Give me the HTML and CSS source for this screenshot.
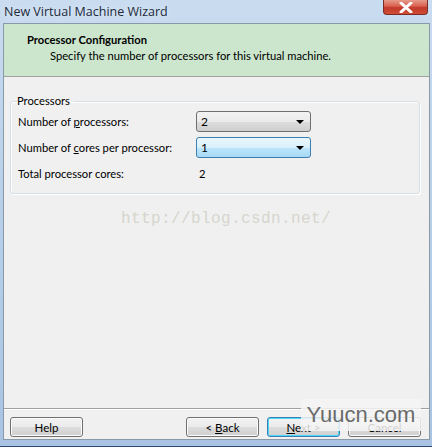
FILE: index.html
```html
<!DOCTYPE html>
<html lang="en">
<head>
    <meta charset="UTF-8">
    <title>New Virtual Machine Wizard</title>
    <link rel="stylesheet" href="styles.css">
</head>
<body>
    <div class="window">
        <div class="titlebar">
            <span class="title">New Virtual Machine Wizard</span>
            <span class="close">
                <svg width="16" height="11" viewBox="0 0 16 11"><path d="M3 1 L13 10 M13 1 L3 10" stroke="#fff" stroke-width="3" stroke-linecap="round"/></svg>
            </span>
        </div>
        <div class="client">
            <div class="header">
                <div class="header-title">Processor Configuration</div>
                <div class="header-sub">Specify the number of processors for this virtual machine.</div>
            </div>
            <div class="body">
                <fieldset class="group">
                    <legend>Processors</legend>
                    <div class="row">
                        <span class="label">Number of <u>p</u>rocessors:</span>
                        <div class="combo">2<span class="arrow"></span></div>
                    </div>
                    <div class="row">
                        <span class="label">Number of <u>c</u>ores per processor:</span>
                        <div class="combo focus">1<span class="arrow"></span></div>
                    </div>
                    <div class="row">
                        <span class="label">Total processor cores:</span>
                        <span class="value">2</span>
                    </div>
                </fieldset>
                <div class="watermark">http://blog.csdn.net/</div>
            </div>
            <div class="footer">
                <button class="btn">Help</button>
                <div class="spacer"></div>
                <button class="btn">&lt; <u>B</u>ack</button>
                <button class="btn default"><u>N</u>ext &gt;</button>
                <button class="btn">Cancel</button>
                <div class="yuucn">Yuucn.com</div>
            </div>
        </div>
    </div>
</body>
</html>
```

FILE: styles.css
```css
html, body { margin: 0; padding: 0; }
body { width: 432px; height: 447px; overflow: hidden; font-family: Lato, "Noto Sans", sans-serif; font-size: 11.2px; color: #000; background: #6d8fb8; }
.window { height: 447px; display: flex; flex-direction: column; background: linear-gradient(180deg, #c9dcf0 0%, #b9d1ea 40%, #a9c4e3 100%); padding: 0 2px 6px 3px; box-sizing: border-box; border-bottom: 1px solid #2b4a70; }
.titlebar { height: 23px; display: flex; align-items: flex-start; position: relative; flex-shrink: 0; }
.title { font-family: "Open Sans", "Noto Sans", sans-serif; font-size: 12.5px; color: #1e2a3a; padding: 3px 0 0 1px; text-shadow: 0 0 6px #e8f0fa; }
.close { position: absolute; right: 2px; top: 0; width: 43px; height: 14px; border: 1px solid #7a2c26; border-top: none; border-radius: 0 0 4px 4px; background: linear-gradient(180deg, #e79a8a 0%, #d8604c 45%, #c0392b 55%, #d24d35 100%); display: flex; align-items: center; justify-content: center; }
.client { flex: 1; display: flex; flex-direction: column; background: #f0f0f0; border: 1px solid #8a99a8; }
.header { height: 53px; background: #cbe6cc; border-bottom: 1px solid #a0a0a0; box-sizing: border-box; padding: 8px 0 0 23px; }
.header-title { font-weight: bold; line-height: 15px; }
.header-sub { padding-left: 23px; line-height: 17px; }
.body { flex: 1; padding: 17px 9px 0 6px; position: relative; }
.group { margin: 0; border: 1px solid #d5dfe5; border-radius: 3px; padding: 0 7px 7px 7px; box-shadow: inset 1px 1px 0 #fff, 1px 1px 0 #fff; }
.group legend { padding: 0 3px 0 0; margin-left: -1px; line-height: 14px; }
.row { display: flex; align-items: center; height: 26px; }
.label { width: 178px; }
.value { padding-left: 3px; }
.combo { width: 109px; height: 19px; border: 1px solid #707070; border-radius: 3px; background: linear-gradient(180deg, #f2f2f2 0%, #ebebeb 50%, #dddddd 51%, #cfcfcf 100%); display: flex; align-items: center; padding-left: 4px; position: relative; font-size: 12px; }
.combo.focus { border-color: #3c7fb1; background: linear-gradient(180deg, #eaf6fd 0%, #d9f0fc 50%, #bee6fd 51%, #a7d9f5 100%); }
.arrow { position: absolute; right: 6px; top: 8px; width: 0; height: 0; border-left: 4px solid transparent; border-right: 4px solid transparent; border-top: 4px solid #000; }
.watermark { position: absolute; left: 117px; top: 133px; font-family: "Liberation Mono", "DejaVu Sans Mono", monospace; font-size: 16px; color: #d6d6ce; letter-spacing: 0.4px; }
.footer { height: 31px; box-sizing: border-box; border-top: 1px solid #a0a0a0; box-shadow: inset 0 1px 0 #fff; display: flex; align-items: flex-start; padding: 8px 8px 0 6px; gap: 8px; position: relative; }
.spacer { flex: 1; }
.btn { width: 73px; height: 20px; padding: 0; font-family: inherit; font-size: 11.5px; color: #000; border: 1px solid #707070; border-radius: 3px; background: linear-gradient(180deg, #f2f2f2 0%, #ebebeb 50%, #dddddd 51%, #cfcfcf 100%); box-shadow: inset 0 0 0 1px #fcfcfc; }
.btn.default { border-color: #3c7fb1; box-shadow: inset 0 0 0 1px #48d8fb; }
.yuucn { position: absolute; right: 8px; top: -10px; width: 120px; height: 32px; background: rgba(244,244,244,0.85); font-family: "Liberation Sans", sans-serif; font-size: 22px; color: #6a6a6a; text-align: center; line-height: 32px; }
```
